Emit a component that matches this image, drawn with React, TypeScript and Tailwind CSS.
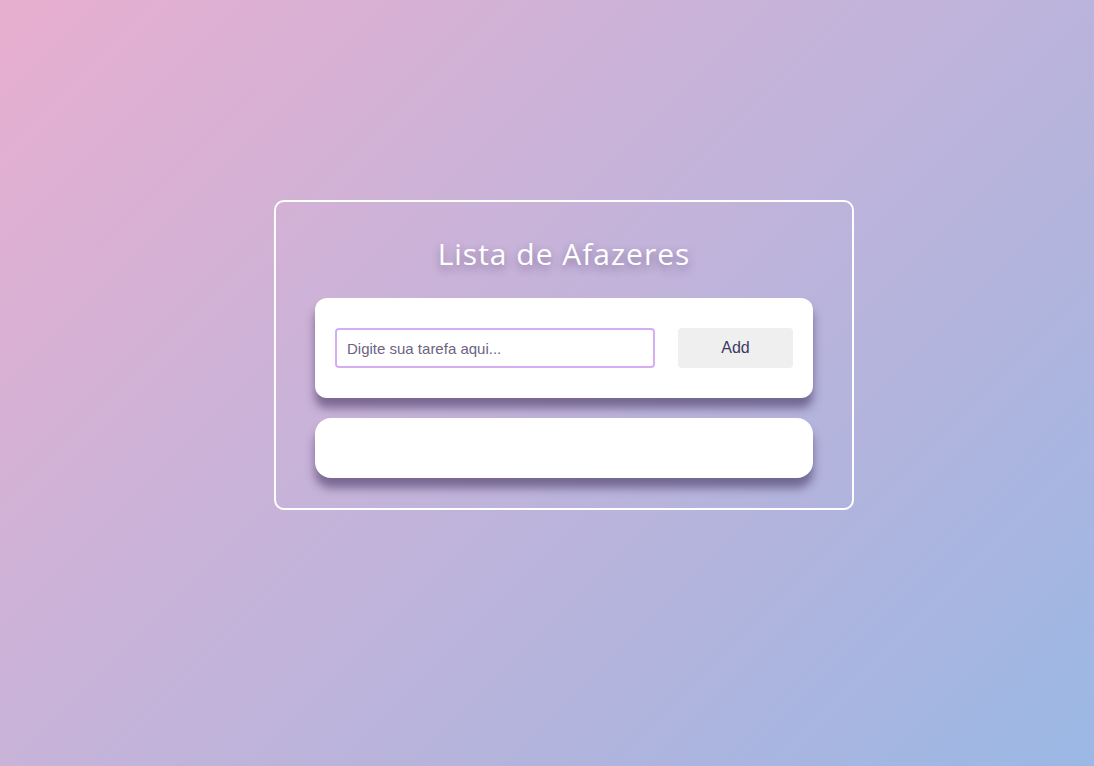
import React, { useState } from 'react';

const App: React.FC = () => {
  const [task, setTask] = useState('');

  return (
    <div className="min-h-screen w-full bg-[linear-gradient(135deg,#e7aecf_0%,#c9b3d9_40%,#b2b4dd_70%,#9bb8e5_100%)] pt-[200px] pl-[274px]">
      <div className="w-[580px] rounded-[10px] border-2 border-white px-[39px] pt-[32px] pb-[30px]">
        {/* Title */}
        <h1 className="mb-[24px] text-center text-[30px] leading-[40px] tracking-[1px] text-white [font-family:'Open_Sans',Lato,sans-serif] [text-shadow:0_4px_8px_rgba(60,40,90,0.45)]">
          Lista de Afazeres
        </h1>

        {/* Input card */}
        <div className="flex h-[100px] items-center justify-between rounded-[12px] bg-white px-[20px] shadow-[0_10px_10px_rgba(45,30,75,0.5)]">
          <input
            type="text"
            value={task}
            onChange={(e) => setTask(e.target.value)}
            placeholder="Digite sua tarefa aqui..."
            className="h-[40px] w-[320px] rounded-[4px] border-2 border-[#d4aef0] bg-white px-[10px] text-[15px] text-[#4a3f5c] outline-none placeholder:text-[#6e6380] [font-family:'Liberation_Sans',Arial,sans-serif]"
          />
          <button className="h-[40px] w-[115px] rounded-[4px] bg-[#efefef] text-[16px] text-[#3b3a66] [font-family:'Liberation_Sans',Arial,sans-serif]">
            Add
          </button>
        </div>

        {/* Task list */}
        <div className="mt-[20px] h-[60px] rounded-[16px] bg-white shadow-[0_10px_10px_rgba(45,30,75,0.5)]"></div>
      </div>
    </div>
  );
};

export default App;
